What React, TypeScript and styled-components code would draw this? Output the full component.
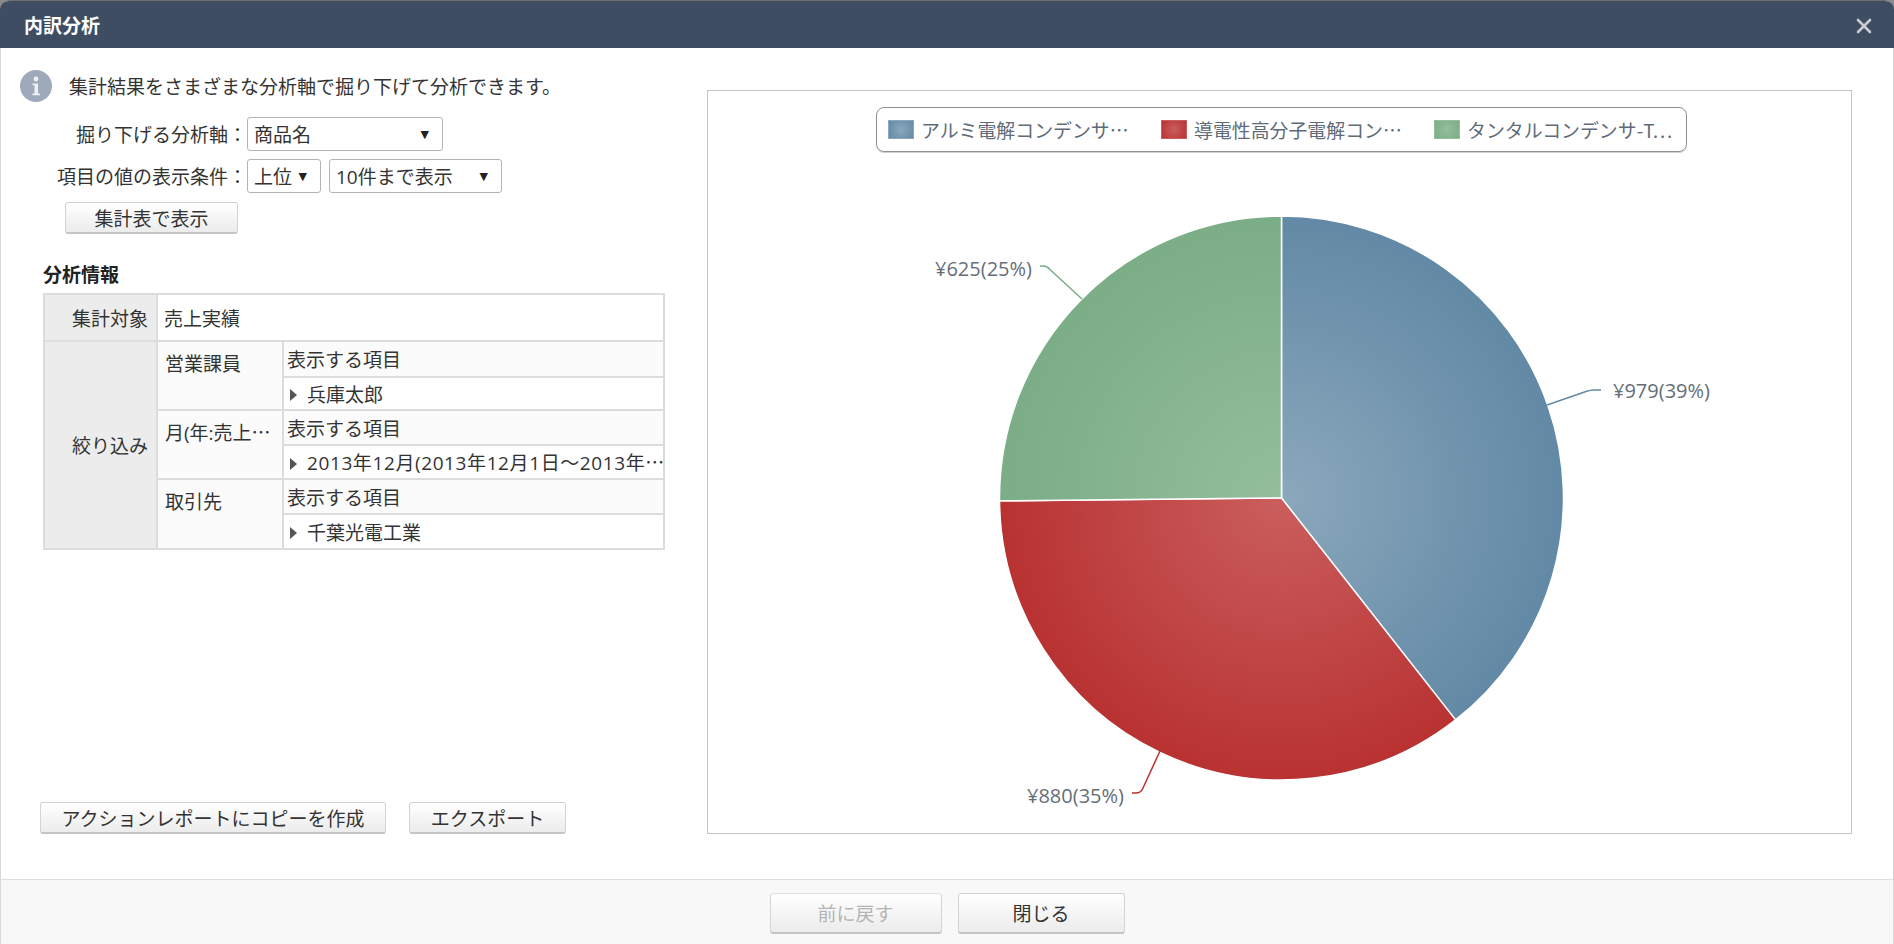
import React, { FC } from "react";
import styled, { createGlobalStyle } from "styled-components";
import { X } from "lucide-react";

const FONT = `"Open Sans", "Noto Sans CJK JP", sans-serif`;

const GlobalStyle = createGlobalStyle`
  html, body {
    margin: 0;
    padding: 0;
    background: #8a8a8a;
  }
  body {
    font-family: ${FONT};
    font-size: 19px;
    color: #333;
  }
`;

const Dialog = styled.div`
  width: 1894px;
  height: 944px;
  box-sizing: border-box;
  display: flex;
  flex-direction: column;
  background: #fff;
  border-radius: 9px 9px 0 0;
  overflow: hidden;
  border-top: 1px solid #6f6f6f;
`;

const TitleBar = styled.div`
  height: 47px;
  flex: none;
  display: flex;
  align-items: center;
  justify-content: space-between;
  padding: 0 18px 0 24px;
  background: #3f4d63;
  color: #fff;
  font-weight: 700;
`;

const CloseIcon = styled(X)`
  color: #c9cdd3;
  margin-top: 2px;
`;

const Body = styled.div`
  flex: 1;
  display: flex;
  min-height: 0;
  border-left: 1px solid #d8d8d8;
  border-right: 1px solid #d8d8d8;
`;

const LeftPane = styled.div`
  width: 706px;
  flex: none;
  box-sizing: border-box;
  display: flex;
  flex-direction: column;
  padding: 22px 0 45px 19px;
`;

const InfoRow = styled.div`
  display: flex;
  align-items: center;
  gap: 17px;
  height: 32px;
`;

const FormRow = styled.div<{ $top: number }>`
  display: flex;
  align-items: center;
  height: 34px;
  margin-top: ${(p) => p.$top}px;
`;

const FormLabel = styled.div`
  width: 227px;
  flex: none;
  text-align: right;
  white-space: nowrap;
`;

const Select = styled.div<{ $width: number }>`
  width: ${(p) => p.$width}px;
  height: 34px;
  box-sizing: border-box;
  display: flex;
  align-items: center;
  justify-content: space-between;
  padding: 0 13px 0 6px;
  border: 1px solid #b4b4b4;
  border-radius: 3px;
  background: #fff;
  white-space: nowrap;

  & + & {
    margin-left: 8px;
  }
`;

const SelectArrow = styled.span`
  font-family: "DejaVu Sans", sans-serif;
  font-size: 11px;
  color: #222;
`;

const Button = styled.div<{ $width: number; $height?: number; $disabled?: boolean }>`
  width: ${(p) => p.$width}px;
  height: ${(p) => p.$height ?? 32}px;
  box-sizing: border-box;
  display: flex;
  align-items: center;
  justify-content: center;
  border: 1px solid #d4d4d4;
  border-bottom: 2px solid #c4c4c4;
  border-top-color: ${(p) => (p.$disabled ? "#e2e2e2" : "#d0d0d0")};
  border-radius: 3px;
  background: linear-gradient(#ffffff, #ececec);
  color: ${(p) => (p.$disabled ? "#b5b5b5" : "#333")};
  white-space: nowrap;
`;

const ShowTableButton = styled(Button)`
  margin: 9px 0 0 45px;
`;

const SectionTitle = styled.div`
  margin: 25px 0 0 23px;
  height: 34px;
  line-height: 32px;
  font-weight: 700;
  color: #222;
`;

const InfoTable = styled.table`
  width: 622px;
  margin-left: 23px;
  table-layout: fixed;
  border-collapse: collapse;
  border: 2px solid #dcdcdc;
`;

const HeadCell = styled.td`
  width: 112px;
  box-sizing: border-box;
  padding: 0 8px 0 0;
  background: #ececec;
  border: 2px solid #dcdcdc;
  text-align: right;
`;

const AxisCell = styled.td`
  width: 125px;
  box-sizing: border-box;
  padding: 7px 0 0 7px;
  vertical-align: top;
  background: #fbfbfb;
  border: 2px solid #dcdcdc;
  overflow: hidden;
  white-space: nowrap;
`;

const TargetCell = styled.td`
  padding: 0 6px;
  border: 2px solid #dcdcdc;
`;

const SubHeadCell = styled.td`
  padding: 0 3px;
  background: #fbfbfb;
  border: 2px solid #dcdcdc;
  white-space: nowrap;
`;

const ValueCell = styled.td`
  padding: 0 0 0 6px;
  border: 2px solid #dcdcdc;
  overflow: hidden;
  white-space: nowrap;
`;

const ValueText = styled.div`
  display: flex;
  align-items: center;
  gap: 10px;
`;

const LongValue = styled.span`
  letter-spacing: 0.6px;
`;

const Caret = styled.span`
  flex: none;
  margin-top: 3px;
  width: 0;
  height: 0;
  border-left: 7px solid #555;
  border-top: 6px solid transparent;
  border-bottom: 6px solid transparent;
`;

const Dots = styled.span`
  font-family: "Noto Sans CJK JP", sans-serif;
`;

const BottomActions = styled.div`
  margin-top: auto;
  margin-left: 20px;
  display: flex;
  gap: 23px;
`;

const ChartPanel = styled.div`
  width: 1145px;
  height: 744px;
  margin-top: 42px;
  box-sizing: border-box;
  display: flex;
  flex-direction: column;
  align-items: center;
  padding-top: 16px;
  border: 1px solid #c4c4c4;
`;

const Legend = styled.div`
  width: 811px;
  height: 45px;
  flex: none;
  box-sizing: border-box;
  display: flex;
  align-items: center;
  padding-left: 11px;
  margin-left: 4px;
  border: 1px solid #909090;
  border-radius: 8px;
  box-shadow: 0 1px 0 #cfcfcf;
`;

const LegendItem = styled.div`
  width: 273px;
  flex: none;
  display: flex;
  align-items: center;
  gap: 7px;
  color: #5f6b78;
  font-size: 18.9px;
  font-family: "Noto Sans CJK JP", sans-serif;
  white-space: nowrap;
`;

const Swatch = styled.span<{ $edge: string; $mid: string }>`
  width: 26px;
  height: 19px;
  flex: none;
  box-sizing: border-box;
  background: radial-gradient(circle, ${(p) => p.$mid}, ${(p) => p.$edge});
  border: 1px solid ${(p) => p.$mid};
`;

const ChartSvg = styled.svg`
  display: block;
  flex: none;
`;

const PieLabel = styled.text`
  font-family: ${FONT};
  font-size: 20px;
  fill: #666e78;
`;

const Footer = styled.div`
  height: 65px;
  flex: none;
  box-sizing: border-box;
  display: flex;
  justify-content: center;
  gap: 16px;
  padding: 13px 0 0 0;
  background: #f8f8f8;
  border-top: 1px solid #dedede;
  border-left: 1px solid #d8d8d8;
  border-right: 1px solid #d8d8d8;
`;

interface Slice {
  id: string;
  value: number;
  edge: string;
  mid: string;
  legend: string;
  label: string;
  labelX: number;
  labelY: number;
  leader: string;
}

const slices: Slice[] = [
  {
    id: "blue",
    value: 979,
    edge: "#6289a5",
    mid: "#8ba8bc",
    legend: "アルミ電解コンデンサ…",
    label: "¥979(39%)",
    labelX: 1613,
    labelY: 398,
    leader: "M1601 390 L1594 390 Q1590 390 1586 391.500 L1547 405",
  },
  {
    id: "red",
    value: 880,
    edge: "#b93232",
    mid: "#ca5e5e",
    legend: "導電性高分子電解コン…",
    label: "¥880(35%)",
    labelX: 1027,
    labelY: 803,
    leader: "M1132 793 L1136 793 Q1141 793 1143 788 L1160 751",
  },
  {
    id: "green",
    value: 625,
    edge: "#7bad87",
    mid: "#94be9c",
    legend: "タンタルコンデンサ-T…",
    label: "¥625(25%)",
    labelX: 935,
    labelY: 276,
    leader: "M1040 266 L1043 266 Q1047 266 1050 269.500 L1082 299",
  },
];

const CX = 1281.5;
const CY = 498;
const R = 282;
const total = slices.reduce((sum, s) => sum + s.value, 0);

const point = (fraction: number) => {
  const a = fraction * Math.PI * 2;
  return `${(CX + R * Math.sin(a)).toFixed(2)} ${(CY - R * Math.cos(a)).toFixed(2)}`;
};

const PieChart: FC = () => {
  let used = 0;
  return (
    <ChartSvg width={1143} height={681} viewBox="708 152 1143 681">
      <defs>
        {slices.map((s) => (
          <radialGradient
            key={s.id}
            id={`grad-${s.id}`}
            gradientUnits="userSpaceOnUse"
            cx={CX}
            cy={CY}
            r={R}
          >
            <stop offset="0" stopColor={s.mid} />
            <stop offset="1" stopColor={s.edge} />
          </radialGradient>
        ))}
      </defs>
      {slices.map((s) => {
        const from = used / total;
        used += s.value;
        const to = used / total;
        const large = to - from > 0.5 ? 1 : 0;
        return (
          <path
            key={s.id}
            d={`M${CX} ${CY} L${point(from)} A${R} ${R} 0 ${large} 1 ${point(to)} Z`}
            fill={`url(#grad-${s.id})`}
            stroke="#fff"
            strokeWidth={1.5}
            strokeLinejoin="round"
          />
        );
      })}
      {slices.map((s) => (
        <g key={s.id}>
          <path d={s.leader} fill="none" stroke={s.edge} strokeWidth={1.5} />
          <PieLabel x={s.labelX} y={s.labelY}>
            {s.label}
          </PieLabel>
        </g>
      ))}
    </ChartSvg>
  );
};

const InfoIcon: FC = () => (
  <svg width={32} height={32} viewBox="0 0 32 32" style={{ flex: "none" }}>
    <circle cx={16} cy={16} r={16} fill="#9eaabb" />
    <circle cx={16} cy={9} r={2.4} fill="#eef0f3" />
    <path d="M12.500 13.500h5.500v10h2v1.800h-7.500v-1.800h2v-8.200h-2z" fill="#eef0f3" />
  </svg>
);

const rows = [
  { key: "staff", axis: <>営業課員</>, value: <>兵庫太郎</>, top: 36, bottom: 33 },
  {
    key: "month",
    axis: (
      <>
        月(年:売上<Dots>…</Dots>
      </>
    ),
    value: (
      <LongValue>
        2013年12月(2013年12月1日～2013年<Dots>…</Dots>
      </LongValue>
    ),
    top: 35,
    bottom: 34,
  },
  { key: "client", axis: <>取引先</>, value: <>千葉光電工業</>, top: 35, bottom: 35 },
];

const App: FC = () => (
  <>
    <GlobalStyle />
    <Dialog>
      <TitleBar>
        内訳分析
        <CloseIcon size={24} strokeWidth={2.6} />
      </TitleBar>
      <Body>
        <LeftPane>
          <InfoRow>
            <InfoIcon />
            集計結果をさまざまな分析軸で掘り下げて分析できます。
          </InfoRow>
          <FormRow $top={15}>
            <FormLabel>掘り下げる分析軸：</FormLabel>
            <Select $width={196}>
              商品名
              <SelectArrow>▼</SelectArrow>
            </Select>
          </FormRow>
          <FormRow $top={8}>
            <FormLabel>項目の値の表示条件：</FormLabel>
            <Select $width={74}>
              上位
              <SelectArrow>▼</SelectArrow>
            </Select>
            <Select $width={173}>
              10件まで表示
              <SelectArrow>▼</SelectArrow>
            </Select>
          </FormRow>
          <ShowTableButton $width={173}>集計表で表示</ShowTableButton>
          <SectionTitle>分析情報</SectionTitle>
          <InfoTable>
            <colgroup>
              <col style={{ width: 113 }} />
              <col style={{ width: 126 }} />
              <col />
            </colgroup>
            <tbody>
              <tr style={{ height: 47 }}>
                <HeadCell>集計対象</HeadCell>
                <TargetCell colSpan={2}>売上実績</TargetCell>
              </tr>
              {rows.map((f, i) => (
                <React.Fragment key={f.key}>
                  <tr style={{ height: f.top }}>
                    {i === 0 && <HeadCell rowSpan={6}>絞り込み</HeadCell>}
                    <AxisCell rowSpan={2}>{f.axis}</AxisCell>
                    <SubHeadCell>表示する項目</SubHeadCell>
                  </tr>
                  <tr style={{ height: f.bottom }}>
                    <ValueCell>
                      <ValueText>
                        <Caret />
                        {f.value}
                      </ValueText>
                    </ValueCell>
                  </tr>
                </React.Fragment>
              ))}
            </tbody>
          </InfoTable>
          <BottomActions>
            <Button $width={346}>アクションレポートにコピーを作成</Button>
            <Button $width={157}>エクスポート</Button>
          </BottomActions>
        </LeftPane>
        <ChartPanel>
          <Legend>
            {slices.map((s) => (
              <LegendItem key={s.id}>
                <Swatch $edge={s.edge} $mid={s.mid} />
                {s.legend}
              </LegendItem>
            ))}
          </Legend>
          <PieChart />
        </ChartPanel>
      </Body>
      <Footer>
        <Button $width={172} $height={41} $disabled>
          前に戻す
        </Button>
        <Button $width={167} $height={41}>
          閉じる
        </Button>
      </Footer>
    </Dialog>
  </>
);

export default App;
